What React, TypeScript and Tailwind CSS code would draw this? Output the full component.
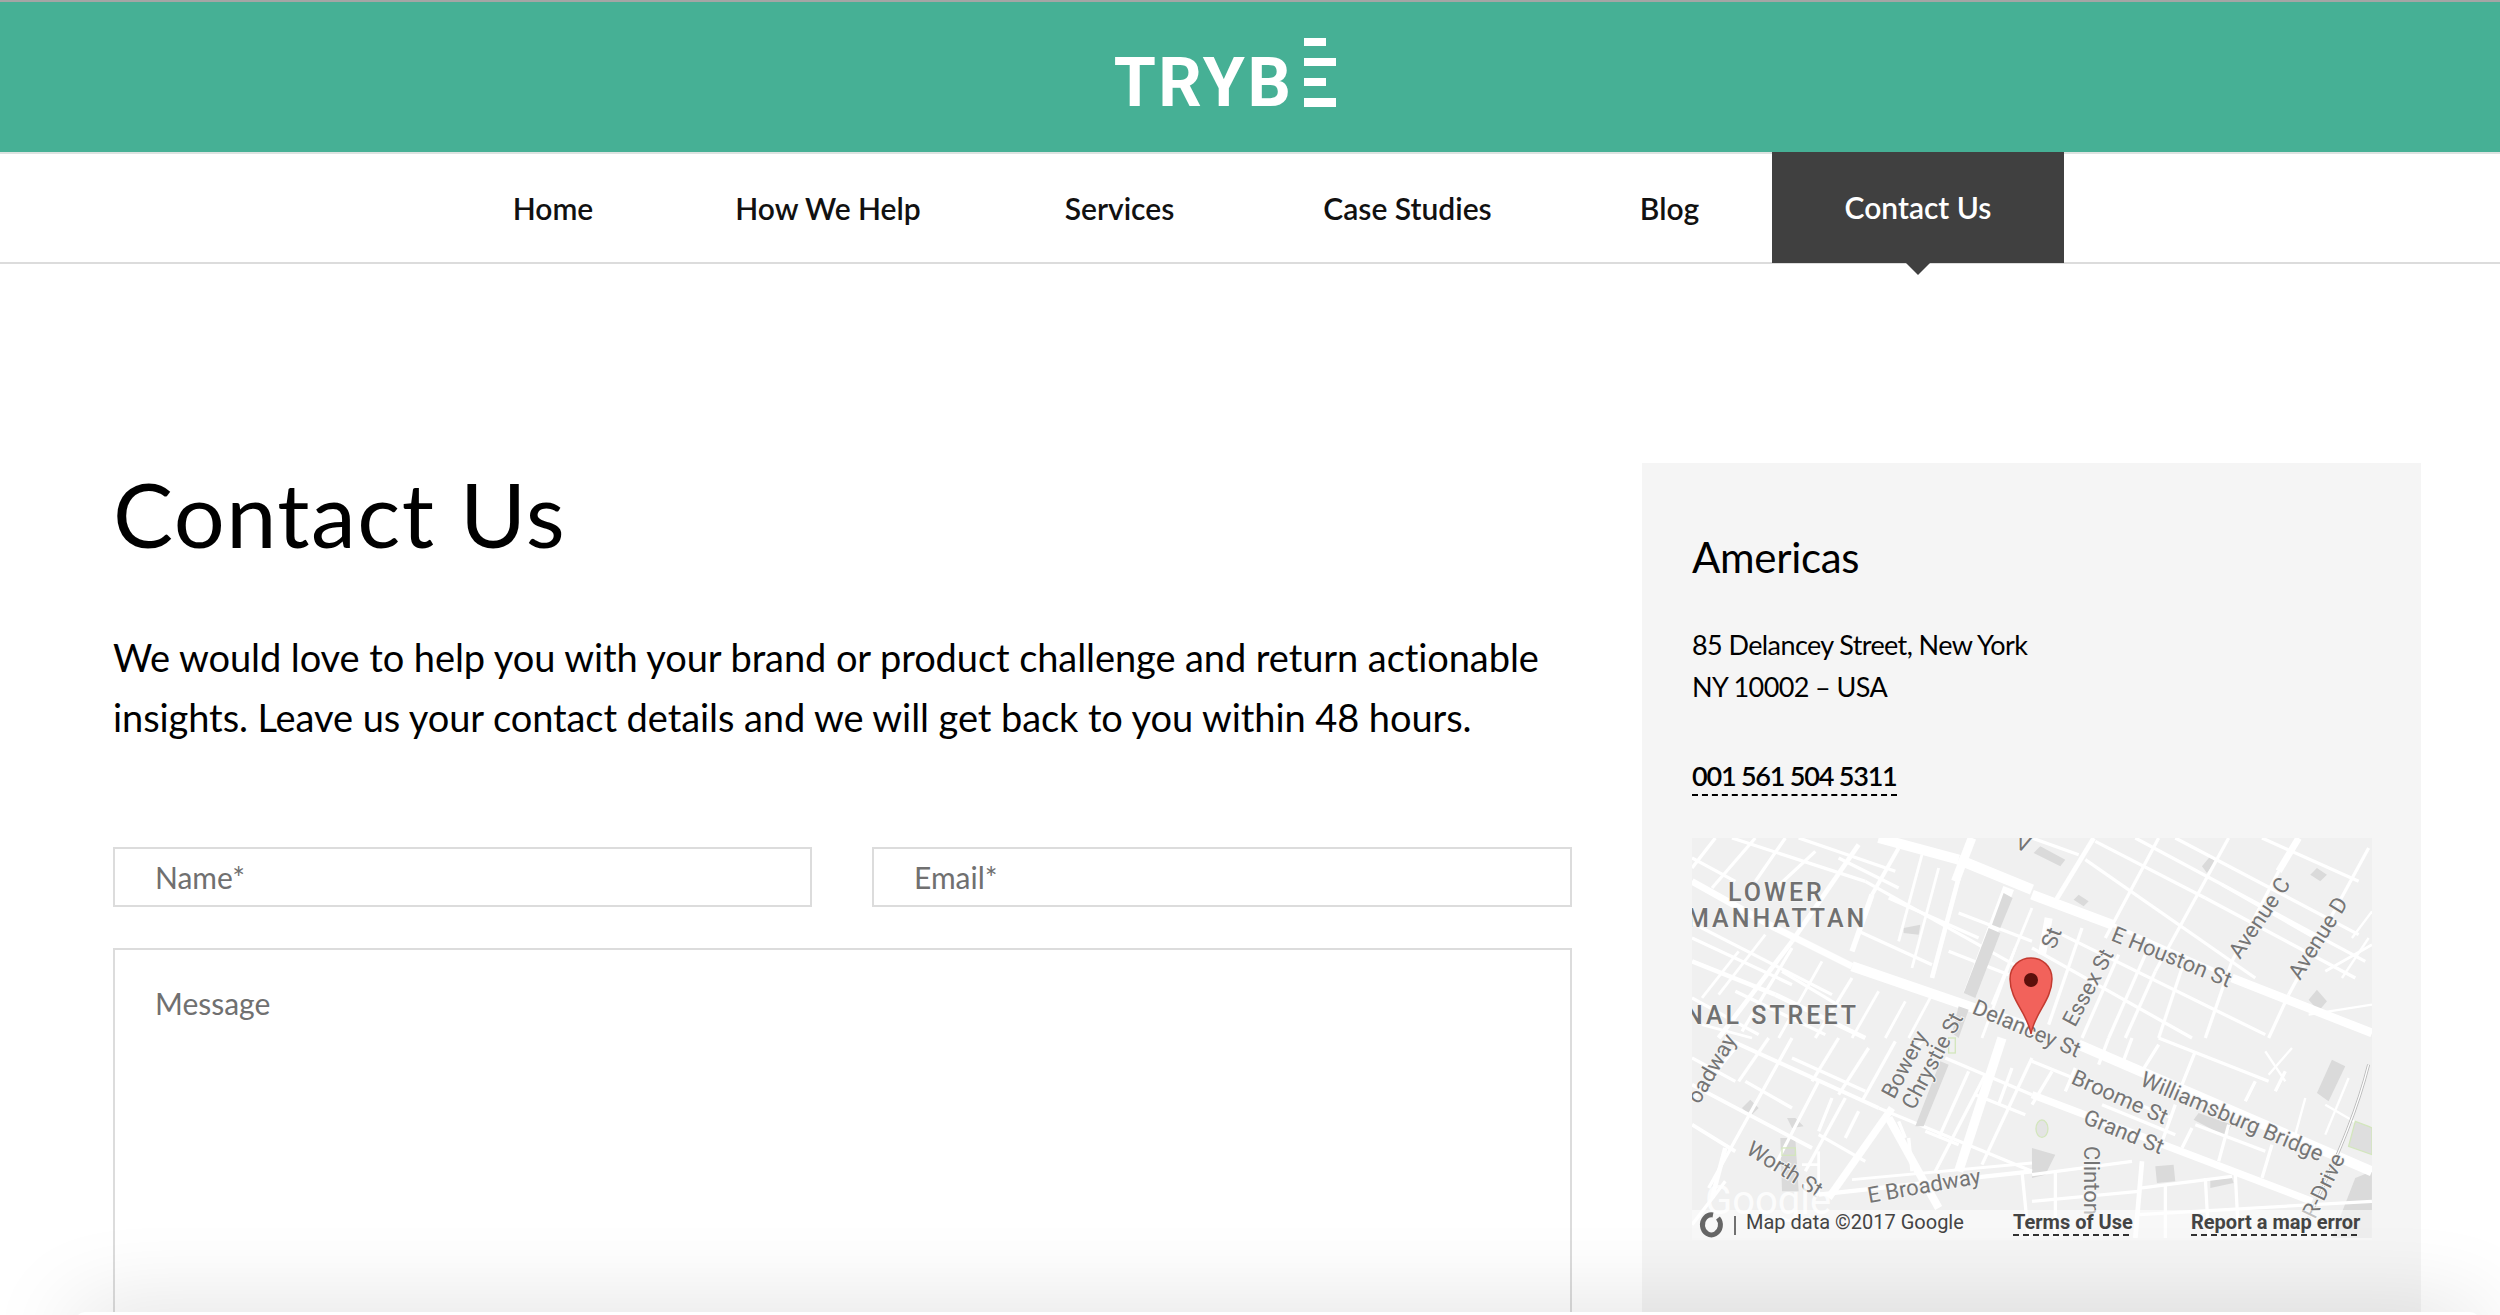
const navItems = ['Home', 'How We Help', 'Services', 'Case Studies', 'Blog']

// roads as [x1, y1, x2, y2, width], in a 3x grid, one list per quarter of the map
type Road = [number, number, number, number, number]

const roadsTopLeft: Road[] = [
  [560, 0, 800, 65, 30], [800, 65, 1020, 155, 32], [0, 130, 250, 270, 20], [250, 270, 480, 385, 20], [480, 385, 1020, 570, 30],
  [0, 370, 250, 470, 14], [250, 470, 520, 600, 14], [320, 0, 610, 100, 7], [120, 0, 520, 130, 7], [520, 130, 1020, 410, 7],
  [500, 280, 720, 380, 7], [800, 225, 1020, 310, 7], [770, 340, 950, 410, 7], [0, 255, 420, 470, 7], [130, 460, 400, 590, 7],
  [270, 400, 470, 520, 7], [0, 60, 130, 130, 7], [70, 0, 0, 90, 7], [190, 0, 60, 150, 7], [280, 0, 190, 130, 7],
  [370, 40, 230, 170, 7], [500, 20, 300, 310, 14], [300, 310, 80, 600, 14], [620, 30, 540, 170, 12], [540, 170, 480, 340, 16],
  [690, 50, 620, 310, 6], [740, 90, 660, 390, 6], [800, 120, 720, 420, 14], [840, 0, 790, 130, 26], [1020, 210, 900, 500, 6],
  [970, 330, 870, 600, 6], [140, 340, 30, 480, 6], [220, 290, 80, 470, 6], [300, 330, 150, 580, 7], [390, 370, 260, 600, 6],
  [480, 420, 370, 600, 7], [560, 460, 480, 600, 6], [640, 490, 580, 600, 6], [720, 470, 650, 600, 6], [950, 150, 830, 470, 34],
  [0, 300, 300, 440, 7], [590, 180, 860, 300, 7], [440, 60, 620, 150, 7], [30, 560, 180, 600, 6], [0, 480, 200, 590, 7],
]

const roadsTopRight: Road[] = [
  [0, 170, 240, 260, 30], [240, 260, 600, 420, 12], [600, 420, 1020, 585, 26], [190, 10, 520, 180, 7], [520, 180, 970, 420, 7],
  [310, 0, 1000, 370, 7], [430, 0, 980, 290, 7], [570, 140, 850, 300, 7], [690, 0, 980, 130, 7], [160, 65, 670, 420, 7],
  [90, 290, 700, 590, 7], [0, 330, 480, 600, 7], [185, 0, 70, 190, 14], [380, 0, 220, 300, 7], [590, 0, 370, 400, 7],
  [370, 400, 280, 600, 7], [800, 0, 740, 100, 20], [740, 100, 600, 370, 7], [600, 370, 520, 600, 7], [1010, 30, 770, 470, 7],
  [770, 470, 710, 600, 7], [150, 270, 50, 560, 7], [260, 350, 150, 600, 7], [340, 350, 230, 600, 7], [450, 390, 380, 600, 7],
  [50, 240, 30, 350, 24], [880, 400, 1020, 320, 6], [930, 420, 1010, 300, 5], [960, 300, 1020, 220, 5], [830, 530, 1020, 500, 5],
  [0, 0, 140, 50, 7],
]

const roadsBottomLeft: Road[] = [
  [100, 0, 560, 210, 12], [560, 210, 1020, 400, 7], [0, 60, 130, 130, 7], [0, 140, 360, 330, 8], [380, 290, 520, 370, 7],
  [700, 280, 800, 320, 7], [760, 60, 1020, 170, 7], [380, 470, 1020, 400, 9], [480, 425, 1020, 375, 6], [600, 210, 410, 480, 22],
  [590, 240, 740, 510, 24], [650, 300, 660, 400, 10], [620, 250, 640, 300, 10], [300, 0, 50, 450, 10], [380, 130, 240, 400, 7],
  [460, 180, 340, 400, 7], [440, 0, 360, 130, 7], [530, 30, 440, 170, 7], [610, 10, 510, 190, 7], [420, 180, 380, 280, 7],
  [500, 220, 460, 300, 7], [930, 0, 800, 400, 28], [1020, 60, 870, 380, 7], [880, 110, 730, 400, 7], [830, 100, 740, 300, 7],
  [990, 400, 1010, 600, 7], [130, 30, 0, 190, 7], [380, 340, 380, 470, 6], [330, 380, 380, 380, 6], [230, 0, 140, 130, 7],
  [0, 260, 130, 340, 8], [100, 330, 60, 480, 14], [300, 60, 520, 160, 7], [160, 130, 300, 210, 7], [700, 0, 640, 60, 7],
  [100, 430, 0, 560, 7], [1000, 230, 850, 170, 7], [960, 90, 920, 200, 7],
]

const roadsBottomRight: Road[] = [
  [140, 20, 1020, 400, 30], [0, 170, 840, 490, 22], [0, 70, 420, 240, 7], [380, 0, 710, 130, 7], [490, 260, 700, 340, 7],
  [230, 0, 200, 80, 7], [300, 0, 270, 80, 7], [380, 20, 330, 100, 7], [490, 40, 450, 140, 7], [670, 130, 640, 190, 7],
  [430, 200, 380, 340, 7], [590, 260, 560, 370, 7], [480, 270, 450, 330, 7], [720, 320, 690, 420, 7], [760, 100, 730, 160, 7],
  [0, 410, 300, 370, 7], [330, 450, 600, 415, 7], [0, 490, 320, 460, 7], [320, 530, 1020, 490, 7], [70, 400, 70, 600, 7],
  [400, 440, 400, 600, 7], [520, 420, 530, 600, 7], [610, 410, 620, 600, 7], [330, 370, 310, 600, 14], [60, 100, 0, 200, 7],
  [130, 90, 100, 160, 7], [820, 180, 790, 290, 5], [700, 40, 760, 130, 5], [780, 30, 710, 110, 5], [210, 200, 430, 290, 7],
  [880, 200, 1000, 270, 5], [950, 120, 880, 290, 5],
]

const quarters: [Road[], number, number][] = [
  [roadsTopLeft, 0, 0],
  [roadsTopRight, 340, 0],
  [roadsBottomLeft, 0, 200],
  [roadsBottomRight, 340, 200],
]

const blocks = [
  '635,270 685,260 680,290 635,285',
  '1025,45 1045,25 1120,65 1105,85',
  '1530,85 1555,55 1570,70 1545,105',
  '1855,110 1875,90 1905,110 1885,130',
  '1145,185 1160,170 1190,190 1175,205',
  '1850,485 1875,455 1905,490 1880,520',
  '150,810 175,785 200,810 175,835',
  '285,840 310,840 335,865 300,870',
  '265,900 310,900 320,1060 270,1060',
  '1875,765 1920,665 1960,685 1910,790',
  '1390,985 1445,980 1450,1030 1395,1035',
  '1555,1025 1620,1020 1625,1035 1555,1050',
  '1505,845 1520,825 1620,860 1600,895',
  '1920,1200 1990,1020 2040,1000 2040,1200',
  '1020,930 1090,950 1060,1010 1020,1020',
]

const labels: [string, number, number, number][] = [
  ['E Houston St', 418, 102, 22],
  ['Avenue C', 548, 122, -56],
  ['Avenue D', 608, 143, -58],
  ['Essex St', 383, 190, -62],
  ['St', 363, 112, -70],
  ['V', 322, 10, 20],
  ['Delancey St', 279, 175, 23],
  ['Williamsburg Bridge', 447, 247, 23],
  ['Broome St', 378, 245, 24],
  ['Grand St', 390, 285, 22],
  ['E Broadway', 177, 365, -10],
  ['Worth St', 53, 315, 32],
  ['Bowery', 202, 262, -62],
  ['Chrystie St', 222, 273, -62],
  ['oadway', 7, 267, -60],
  ['R-Drive', 623, 382, -64],
  ['Clinton', 392, 308, 90],
]

function MapPicture() {
  return (
    <svg viewBox="0 0 680 402" className="block h-[402px] w-[680px]" fontFamily="Roboto, sans-serif">
      <rect width="680" height="402" fill="#f0f0f0" />
      <g transform="scale(0.3333)">
        {blocks.map((p) => (
          <polygon key={p} points={p} fill="#dadada" />
        ))}
      </g>
      {quarters.map(([roads, ox, oy]) => (
        <g key={`${ox}-${oy}`} transform={`translate(${ox} ${oy}) scale(0.3333)`} stroke="#fff">
          {roads.map(([x1, y1, x2, y2, w], i) => (
            <line key={i} x1={x1} y1={y1} x2={x2} y2={y2} strokeWidth={w < 10 ? w * 1.4 : w} />
          ))}
        </g>
      ))}
      <g transform="scale(0.3333)">
        {/* park strips go back on top of the wide road */}
        <polygon points="900,260 935,165 962,180 925,270" fill="#dadada" />
        <polygon points="815,465 890,270 925,285 850,480" fill="#dadada" />
        <polygon points="780,585 800,505 830,515 800,600" fill="#dadada" />
        <polygon points="670,865 695,865 770,680 745,670" fill="#dadada" />
        <rect x="270" y="930" width="40" height="22" fill="none" stroke="#d3e6bd" strokeWidth="4" />
        <rect x="770" y="600" width="20" height="45" fill="none" stroke="#d3e6bd" strokeWidth="4" />
        <ellipse cx="1050" cy="872" rx="18" ry="26" fill="#e4e4e4" stroke="#d3e6bd" strokeWidth="4" />
        <path d="M2030 680C2000 800 1950 930 1850 1140" fill="none" stroke="#b9b9b9" strokeWidth="9" />
        <path d="M2030 680C2000 800 1950 930 1850 1140" fill="none" stroke="#fff" strokeWidth="4" />
        <polygon points="1990,850 2030,865 2040,870 2040,950 1970,925" fill="#dedede" stroke="#d3e6bd" strokeWidth="4" />
      </g>
      <g fill="#707070" fontSize="25" fontWeight="500" letterSpacing="3" stroke="#f5f5f5" strokeWidth="2" paintOrder="stroke">
        <text x="36" y="63">LOWER</text>
        <text x="-5" y="89">MANHATTAN</text>
        <text x="-7" y="186">NAL STREET</text>
      </g>
      <g fill="#757575" fontSize="22" stroke="#f5f5f5" strokeWidth="2" paintOrder="stroke">
        {labels.map(([t, x, y, a]) => (
          <text key={t} x={x} y={y} transform={`rotate(${a} ${x} ${y})`}>
            {t}
          </text>
        ))}
      </g>
      <text x="13" y="376" fill="#fff" fontSize="40" opacity="0.85">Google</text>
      {/* pin */}
      <path
        d="M339 196C336 176 318 162 318 141C318 128 328 120 339 120C350 120 360 128 360 141C360 162 342 176 339 196Z"
        fill="#f2625b"
        stroke="#c33a30"
        strokeWidth="1.5"
      />
      <ellipse cx="339" cy="142" rx="7" ry="7" fill="#5c0f0b" />
      {/* attribution strip */}
      <rect x="0" y="372" width="680" height="28" fill="#fff" opacity="0.55" />
      <rect x="0" y="400" width="680" height="2" fill="#f7f7f7" />
      <path d="M21 377a9 10 0 1 0 5 3" fill="none" stroke="#666" strokeWidth="5" />
      <line x1="43" y1="378" x2="43" y2="397" stroke="#444" strokeWidth="1.5" />
      <g fontSize="20" fill="#444">
        <text x="54" y="391">Map data ©2017 Google</text>
        <text x="321" y="391" fontWeight="700">Terms of Use</text>
        <text x="499" y="391" fontWeight="700">Report a map error</text>
      </g>
      <g stroke="#333" strokeWidth="2" strokeDasharray="6 4">
        <line x1="321" y1="397" x2="438" y2="397" />
        <line x1="499" y1="397" x2="667" y2="397" />
      </g>
    </svg>
  )
}

function Logo() {
  return (
    <div className="mr-[50px] flex items-start">
      <span className="mt-[41px] font-['Roboto',sans-serif] text-[68px] leading-[80px] font-bold tracking-[2.5px] text-white">
        TRYB
      </span>
      <div className="mt-[36px] ml-[11px] flex w-[32px] flex-col gap-[12px]">
        <div className="h-[8px] w-[22px] bg-white" />
        <div className="h-[8px] bg-white" />
        <div className="h-[8px] w-[22px] bg-white" />
        <div className="h-[9px] bg-white" />
      </div>
    </div>
  )
}

export default function App() {
  return (
    <div className="relative h-[1315px] overflow-hidden bg-white font-['Lato',sans-serif] text-black">
      <header className="flex h-[152px] justify-center border-t-2 border-[#a5a5a5] bg-[#46b095]">
        <Logo />
      </header>
      <nav className="flex h-[112px] justify-center border-y-2 border-t-[#dde3e1] border-b-[#dcdcdc] pl-[5px]">
        <div className="grid grid-cols-[224px_326px_257px_319px_205px_292px] text-[30px] font-semibold text-[#111]">
          {navItems.map((item) => (
            <a key={item} className="flex h-[108px] items-center justify-center">
              {item}
            </a>
          ))}
          <a className="relative -mt-[2px] flex h-[111px] items-center justify-center bg-[#404040] text-white">
            Contact Us
            <span className="absolute top-full left-1/2 -ml-[12px] h-0 w-0 border-x-[12px] border-t-[12px] border-x-transparent border-t-[#404040]" />
          </a>
        </div>
      </nav>
      <main className="flex pt-[199px] pl-[113px]">
        <div className="w-[1459px]">
          <h1 className="-mt-[6px] text-[90px] leading-[112px] font-normal tracking-[1.5px]">Contact Us</h1>
          <p className="mt-[58px] text-[38px] leading-[60px] tracking-[-0.08px]">
            We would love to help you with your brand or product challenge and return actionable
            <br />
            insights. Leave us your contact details and we will get back to you within 48 hours.
          </p>
          <div className="mt-[100px] flex gap-[60px]">
            <input
              placeholder="Name*"
              className="h-[60px] w-[699px] border-2 border-[#dcdcdc] px-[40px] text-[30px] outline-none placeholder:text-[#707070]"
            />
            <input
              placeholder="Email*"
              className="h-[60px] w-[700px] border-2 border-[#dcdcdc] px-[40px] text-[30px] outline-none placeholder:text-[#707070]"
            />
          </div>
          <textarea
            placeholder="Message"
            className="mt-[41px] block h-[420px] w-full resize-none border-2 border-[#dcdcdc] px-[40px] py-[31px] text-[30px] outline-none placeholder:text-[#707070]"
          />
        </div>
        <aside className="ml-[70px] h-[900px] w-[779px] bg-[#f5f5f5] px-[50px] pt-[66px]">
          <h2 className="text-[42px] leading-[56px] font-normal tracking-[-0.3px]">Americas</h2>
          <p className="mt-[39px] text-[27px] leading-[42px] tracking-[-0.6px]">
            85 Delancey Street, New York
            <br />
            NY 10002 – USA
          </p>
          <a className="mt-[50px] inline-block border-b-2 border-dashed border-black text-[27px] leading-[36px] font-semibold tracking-[-1.2px]">
            001 561 504 5311
          </a>
          <div className="mt-[42px]">
            <MapPicture />
          </div>
        </aside>
      </main>
      {/* the window behind the browser's lower edge */}
      <div className="absolute top-[1312px] right-[20px] left-[75px] h-[60px] rounded-t-[10px] bg-white shadow-[0_0_90px_rgba(0,0,0,0.15)]" />
    </div>
  )
}
